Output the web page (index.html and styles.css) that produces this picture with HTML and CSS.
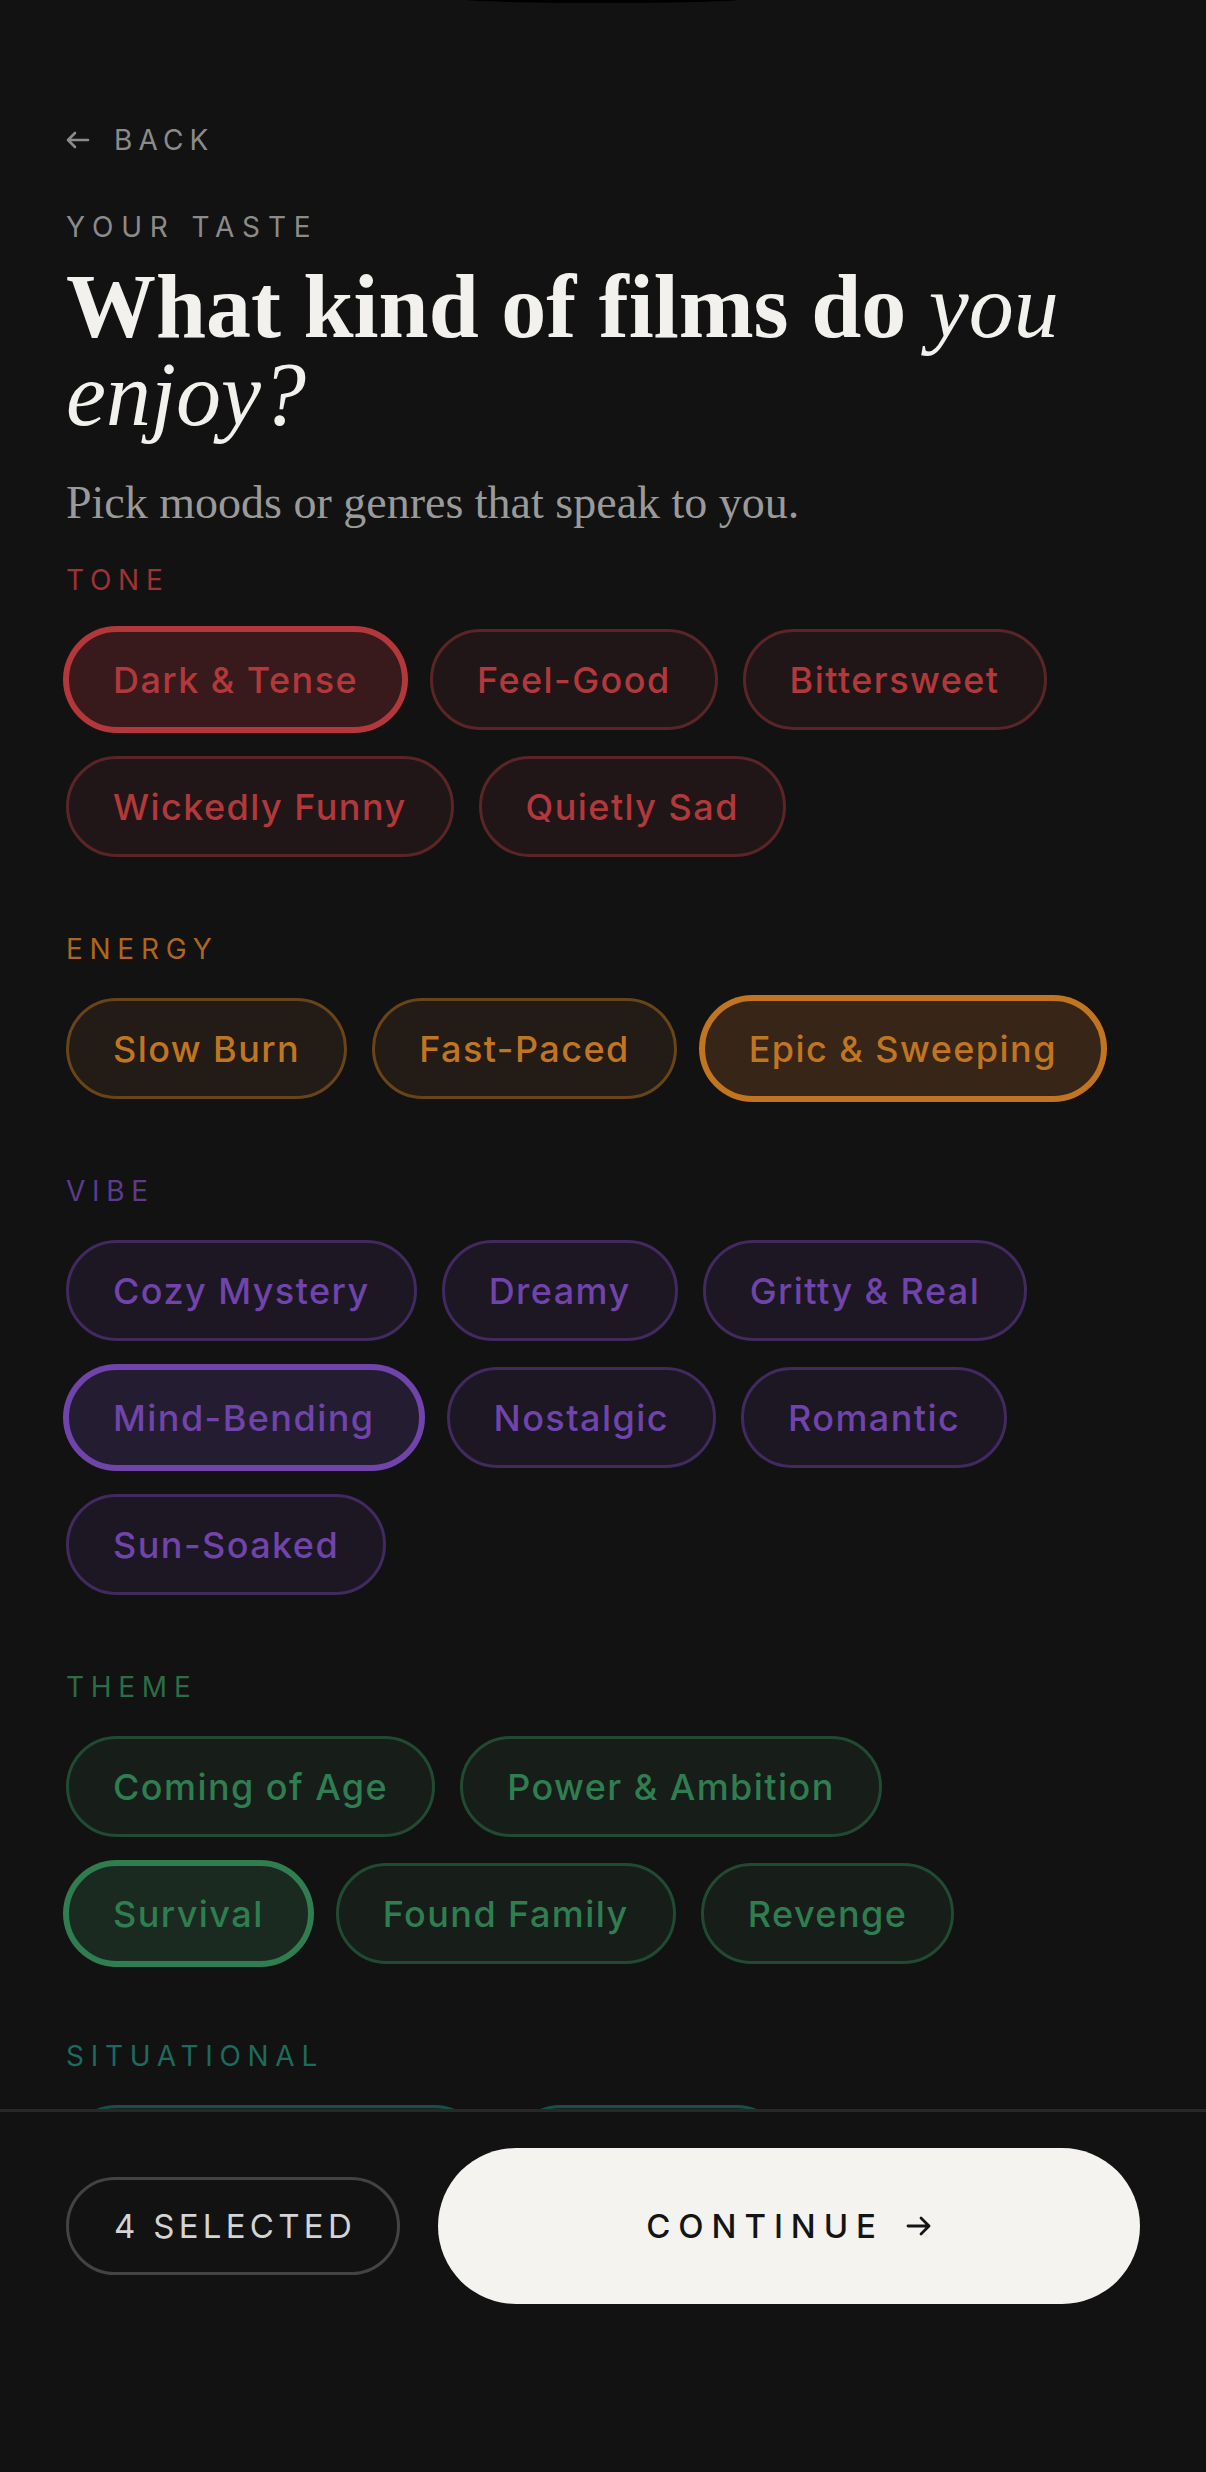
FILE: index.html
```html
<!DOCTYPE html>
<html lang="en">
<head>
<meta charset="utf-8">
<title>Your taste</title>
<link rel="stylesheet" href="styles.css">
</head>
<body>
<div class="screen">
  <div class="island"></div>
  <main class="content">
    <a class="back" href="#">
      <svg class="back-icon" width="24" height="18" viewBox="0 0 24 18" fill="none" stroke="currentColor" stroke-width="2.6" stroke-linecap="round" stroke-linejoin="round"><path d="M22 9H2M9 2L2 9l7 7"/></svg>
      <span>BACK</span>
    </a>
    <p class="eyebrow">YOUR TASTE</p>
    <h1 class="title">What kind of films do <em>you enjoy?</em></h1>
    <p class="sub">Pick moods or genres that speak to you.</p>

    <section class="section tone">
      <h2 class="label">TONE</h2>
      <div class="chips">
        <button class="chip is-on">Dark &amp; Tense</button>
        <button class="chip">Feel-Good</button>
        <button class="chip">Bittersweet</button>
        <button class="chip">Wickedly Funny</button>
        <button class="chip">Quietly Sad</button>
      </div>
    </section>

    <section class="section energy">
      <h2 class="label">ENERGY</h2>
      <div class="chips">
        <button class="chip">Slow Burn</button>
        <button class="chip">Fast-Paced</button>
        <button class="chip is-on">Epic &amp; Sweeping</button>
      </div>
    </section>

    <section class="section vibe">
      <h2 class="label">VIBE</h2>
      <div class="chips">
        <button class="chip">Cozy Mystery</button>
        <button class="chip">Dreamy</button>
        <button class="chip">Gritty &amp; Real</button>
        <button class="chip is-on">Mind-Bending</button>
        <button class="chip">Nostalgic</button>
        <button class="chip">Romantic</button>
        <button class="chip">Sun-Soaked</button>
      </div>
    </section>

    <section class="section theme">
      <h2 class="label">THEME</h2>
      <div class="chips">
        <button class="chip">Coming of Age</button>
        <button class="chip">Power &amp; Ambition</button>
        <button class="chip is-on">Survival</button>
        <button class="chip">Found Family</button>
        <button class="chip">Revenge</button>
      </div>
    </section>

    <section class="section situational">
      <h2 class="label">SITUATIONAL</h2>
      <div class="chips">
        <button class="chip">Late-Night Watch</button>
        <button class="chip">Rainy Day</button>
      </div>
    </section>
  </main>

  <footer class="footer">
    <div class="count">4 SELECTED</div>
    <button class="continue">
      <span>CONTINUE</span>
      <svg width="26" height="22" viewBox="0 0 26 22" fill="none" stroke="currentColor" stroke-width="2.8" stroke-linecap="round" stroke-linejoin="round"><path d="M2 11h21M15 3l8 8-8 8"/></svg>
    </button>
  </footer>
</div>
</body>
</html>
```

FILE: styles.css
```css
* {
  box-sizing: border-box;
  margin: 0;
  padding: 0;
}

html,
body {
  background: #121212;
}

body {
  margin: 0;
  font-family: Inter, "Liberation Sans", sans-serif;
}

.screen {
  position: relative;
  height: 2472px;
  display: flex;
  flex-direction: column;
  overflow: hidden;
}

.island {
  position: absolute;
  top: -6px;
  left: 50%;
  transform: translateX(-50%);
  width: 290px;
  height: 9px;
  background: #000;
  border-radius: 50%;
}

.content {
  flex: 1;
  min-height: 0;
  overflow: hidden;
  padding: 125px 66px 0;
}

.back {
  display: flex;
  align-items: center;
  gap: 24px;
  font-size: 28px;
  line-height: 30px;
  letter-spacing: 0.22em;
  color: #8b8b8b;
  text-decoration: none;
}

.back-icon {
  flex: none;
}

.eyebrow {
  margin-top: 57px;
  font-size: 28px;
  line-height: 30px;
  letter-spacing: 0.28em;
  color: #8b8b8b;
}

.title {
  margin-top: 21px;
  font-family: "Liberation Serif", serif;
  font-weight: 700;
  font-size: 90px;
  line-height: 88px;
  letter-spacing: 0;
  color: #f3f1ed;
}

.title em {
  font-weight: 400;
  font-style: italic;
}

.sub {
  margin-top: 34px;
  font-family: "Liberation Serif", serif;
  font-size: 46px;
  line-height: 60px;
  color: #9a9a9a;
}

.section {
  margin-top: 77px;
}

.sub + .section {
  margin-top: 32px;
}

.label {
  font-size: 28px;
  line-height: 30px;
  font-weight: 400;
  letter-spacing: 0.24em;
  color: var(--label);
}

.chips {
  margin-top: 34px;
  display: flex;
  flex-wrap: wrap;
  gap: 26px 25px;
}

.chip {
  display: inline-flex;
  align-items: center;
  height: 101px;
  padding: 0 44px;
  border: 3px solid var(--border);
  border-radius: 999px;
  background: var(--bg);
  color: var(--text);
  font-family: Inter, "Liberation Sans", sans-serif;
  font-size: 36px;
  font-weight: 500;
  letter-spacing: 0.04em;
  white-space: nowrap;
  cursor: pointer;
}

.chip.is-on {
  border-color: var(--text);
  background: var(--on-bg);
  box-shadow: 0 0 0 3px var(--text);
}

.tone {
  --label: #9e3234;
  --text: #b3383b;
  --border: #5b2527;
  --bg: #201617;
  --on-bg: #381a1c;
}

.energy {
  --label: #ae661f;
  --text: #c27520;
  --border: #6a4419;
  --bg: #231b15;
  --on-bg: #372617;
}

.vibe {
  --label: #5d3b8b;
  --text: #7044aa;
  --border: #42295f;
  --bg: #1c1723;
  --on-bg: #241c30;
}

.theme {
  --label: #2a6d47;
  --text: #2f7d50;
  --border: #214a32;
  --bg: #171d19;
  --on-bg: #1b2a21;
}

.situational {
  --label: #1d6a5f;
  --text: #237a6e;
  --border: #17504a;
  --bg: #142220;
  --on-bg: #17302c;
}

.footer {
  flex: none;
  display: flex;
  align-items: center;
  gap: 38px;
  padding: 36px 66px 168px;
  border-top: 3px solid #282828;
  background: #121212;
}

.count {
  display: flex;
  align-items: center;
  height: 98px;
  padding: 0 41px 0 45px;
  border: 3px solid #434343;
  border-radius: 999px;
  font-size: 33px;
  letter-spacing: 0.13em;
  color: #d4d4d4;
  white-space: nowrap;
}

.continue {
  flex: 1;
  height: 156px;
  display: flex;
  align-items: center;
  justify-content: center;
  gap: 22px;
  border: none;
  border-radius: 999px;
  background: #f4f3f0;
  color: #141414;
  font-family: Inter, "Liberation Sans", sans-serif;
  font-size: 33px;
  font-weight: 500;
  letter-spacing: 0.24em;
  cursor: pointer;
}
```
